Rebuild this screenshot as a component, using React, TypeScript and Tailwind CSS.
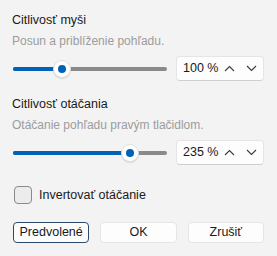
import React from "react";

const font = { fontFamily: '"Liberation Sans", "Segoe UI", sans-serif' };

function Chevron({ up }: { up?: boolean }) {
  return (
    <svg width="11" height="7" viewBox="0 0 11 7" fill="none">
      {up ? (
        <path d="M1 6 L5.5 1.5 L10 6" stroke="#3a3a3a" strokeWidth="1.1" />
      ) : (
        <path d="M1 1 L5.5 5.5 L10 1" stroke="#3a3a3a" strokeWidth="1.1" />
      )}
    </svg>
  );
}

function Slider({ pos }: { pos: number }) {
  return (
    <div className="relative flex-1 h-[20px] flex items-center">
      <div className="w-full h-[4px] rounded-full bg-[#8a8a8a] relative">
        <div
          className="absolute left-0 top-0 h-[4px] rounded-full bg-[#0062b5]"
          style={{ width: pos + "px" }}
        />
      </div>
      <div
        className="absolute top-[1px] w-[18px] h-[18px] rounded-full bg-white border border-[#e0e0e0] shadow-[0_1px_1px_rgba(0,0,0,0.12)] flex items-center justify-center"
        style={{ left: pos - 9 + "px" }}
      >
        <div className="w-[8px] h-[8px] rounded-full bg-[#0062b5]" />
      </div>
    </div>
  );
}

function Spin({ value }: { value: string }) {
  return (
    <div className="w-[88px] h-[25px] bg-[#fdfdfd] border border-[#e5e5e5] border-b-[#cfcfcf] rounded-[4px] flex items-center pl-[6px]">
      <span className="text-[12.5px] text-[#1a1a1a] w-[38px] leading-none whitespace-nowrap">{value}</span>
      <div className="w-[24px] flex justify-center">
        <Chevron up />
      </div>
      <div className="w-[24px] flex justify-center">
        <Chevron />
      </div>
    </div>
  );
}

function Section({
  title,
  desc,
  pos,
  value,
}: {
  title: string;
  desc: string;
  pos: number;
  value: string;
}) {
  return (
    <div className="flex flex-col">
      <div className="text-[12.5px] leading-[18px] text-[#1a1a1a]">{title}</div>
      <div className="text-[12px] leading-[18px] text-[#9c9c9c] mt-[3px]">{desc}</div>
      <div className="flex items-center gap-[9px] mt-[6px] pl-[1px]">
        <Slider pos={pos} />
        <Spin value={value} />
      </div>
    </div>
  );
}

export default function App() {
  return (
    <div
      className="w-[277px] h-[256px] bg-[#f3f3f3] pl-[12px] pr-[13px] pt-[11px] flex flex-col"
      style={font}
    >
      <Section title="Citlivosť myši" desc="Posun a priblíženie pohľadu." pos={49} value="100 %" />
      <div className="mt-[14px]">
        <Section
          title="Citlivosť otáčania"
          desc="Otáčanie pohľadu pravým tlačidlom."
          pos={117}
          value="235 %"
        />
      </div>
      <div className="flex items-center gap-[7px] mt-[21px] pl-[2px]">
        <div className="w-[18px] h-[18px] rounded-[4px] border border-[#8a8a8a] bg-[#ececec]" />
        <span className="text-[12.5px] text-[#1a1a1a]">Invertovať otáčanie</span>
      </div>
      <div className="grid grid-cols-3 gap-[11px] mt-[17px] pl-[1px]">
        <button className="h-[21px] rounded-[4px] border border-[#2a4b6e] bg-[#fdfdfd] text-[12.5px] text-[#1a1a1a] leading-none">
          Predvolené
        </button>
        <button className="h-[21px] rounded-[4px] border border-[#e5e5e5] bg-[#fdfdfd] text-[12.5px] text-[#1a1a1a] leading-none">
          OK
        </button>
        <button className="h-[21px] rounded-[4px] border border-[#e5e5e5] bg-[#fdfdfd] text-[12.5px] text-[#1a1a1a] leading-none">
          Zrušiť
        </button>
      </div>
    </div>
  );
}
